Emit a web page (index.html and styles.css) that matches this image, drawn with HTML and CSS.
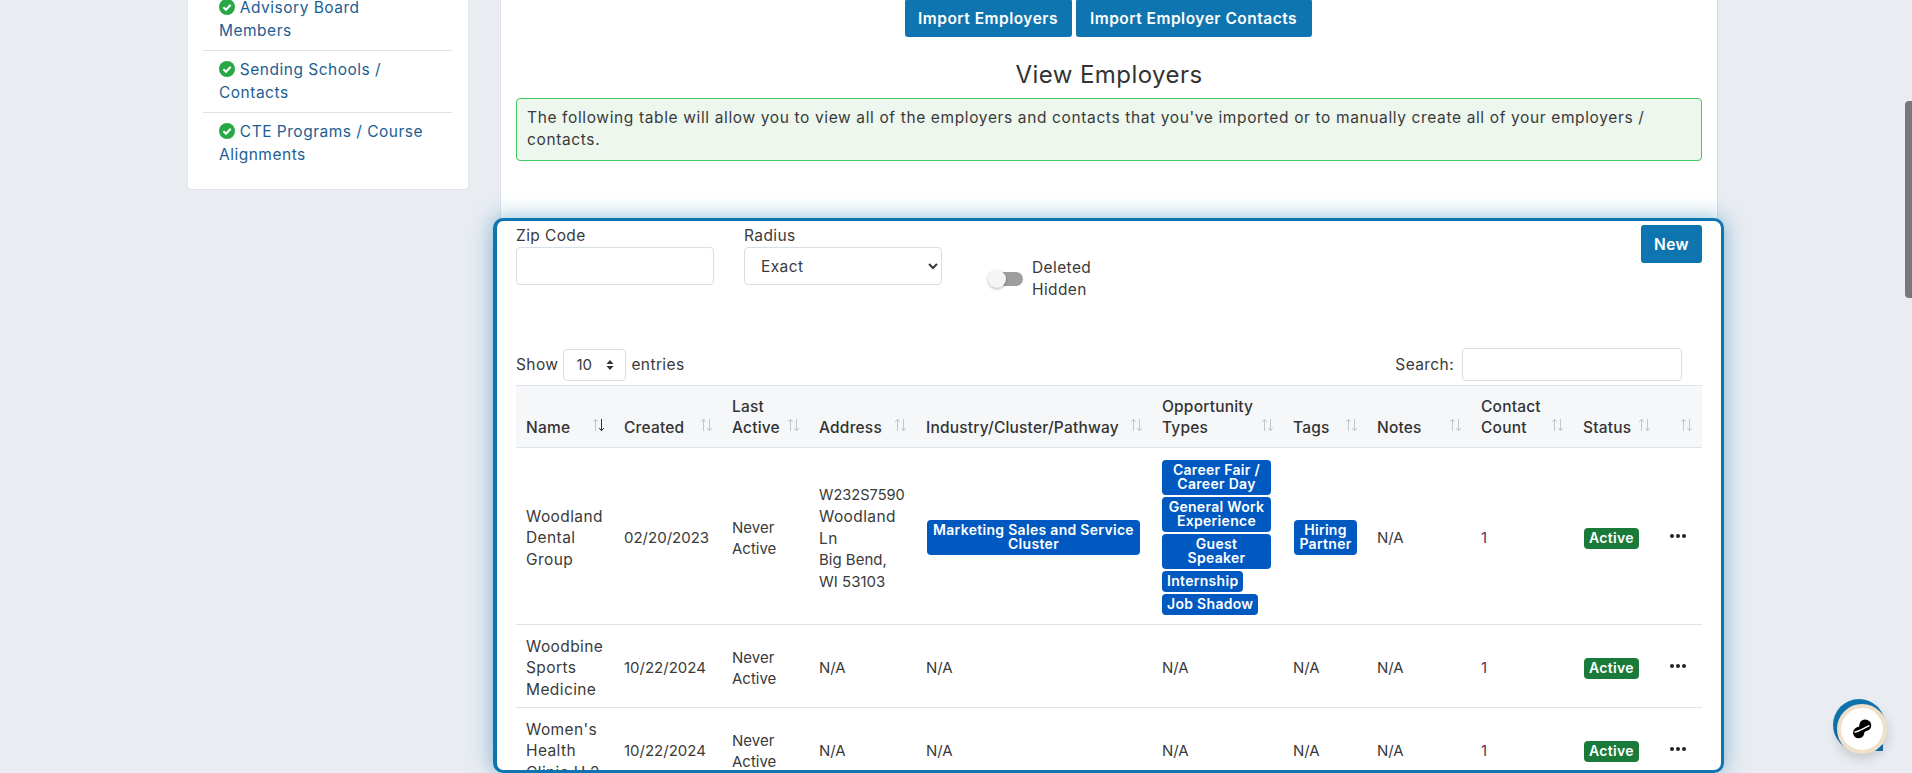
FILE: index.html
```html
<!DOCTYPE html>
<html lang="en">
<head>
<meta charset="utf-8">
<title>View Employers</title>
<link rel="stylesheet" href="styles.css">
</head>
<body>
<svg class="defs" width="0" height="0" aria-hidden="true">
  <symbol id="sort" viewBox="0 0 13 14"><path d="M3.5 13V1.5M1.2 4 3.5 1.2 5.8 4" fill="none" stroke="currentColor" stroke-width="1"/><path d="M9.5 1v11.5M7.2 10l2.3 2.8 2.3-2.8" fill="none" stroke="currentColor" stroke-width="1"/></symbol>
  <symbol id="sort-down" viewBox="0 0 13 14"><path d="M3.5 13V1.5M1.2 4 3.5 1.2 5.8 4" fill="none" stroke="#c3c6ca" stroke-width="1"/><path d="M9.5 1v11.5M7.2 10l2.3 2.8 2.3-2.8" fill="none" stroke="#333" stroke-width="1"/></symbol>
  <symbol id="check" viewBox="0 0 16 16"><circle cx="8" cy="8" r="8" fill="#28a745"/><path d="M4.4 8.3 7 10.8l4.7-5" fill="none" stroke="#fff" stroke-width="2"/></symbol>
</svg>
<div class="page">
  <div class="layout">
    <aside class="sidebar">
      <ul class="steps">
        <li><a class="step"><svg class="check"><use href="#check"/></svg> Advisory Board Members</a></li>
        <li><a class="step"><svg class="check"><use href="#check"/></svg> Sending Schools / Contacts</a></li>
        <li><a class="step"><svg class="check"><use href="#check"/></svg> CTE Programs / Course Alignments</a></li>
      </ul>
    </aside>
    <main class="main">
      <div class="import-row">
        <button class="btn btn-a">Import Employers</button>
        <button class="btn btn-b">Import Employer Contacts</button>
      </div>
      <h2 class="title">View Employers</h2>
      <div class="alert">The following table will allow you to view all of the employers and contacts that you've imported or to manually create all of your employers / contacts.</div>
      <section class="panel">
        <div class="filters">
          <label class="field"><span>Zip Code</span><input class="control" type="text"></label>
          <label class="field"><span>Radius</span><select class="control select"><option>Exact</option></select></label>
          <div class="toggle-group">
            <span class="toggle"><span class="knob"></span></span>
            <span class="toggle-label">Deleted Hidden</span>
          </div>
          <button class="btn btn-new">New</button>
        </div>
        <div class="table-tools">
          <div class="length">Show
            <span class="length-select"><span class="plain">10</span><svg width="8" height="12" viewBox="0 0 8 12"><path d="M4 1 7.5 5h-7zM4 11 .5 7h7z" fill="#333"/></svg></span>
            entries</div>
          <label class="search">Search: <input class="search-input" type="text"></label>
        </div>
        <table class="grid">
          <colgroup>
            <col class="c1"><col class="c2"><col class="c3"><col class="c4"><col class="c5"><col class="c6"><col class="c7"><col class="c8"><col class="c9"><col class="c10"><col class="c11">
          </colgroup>
          <thead>
            <tr>
              <th><div class="th"><span>Name</span><svg class="sort"><use href="#sort-down"/></svg></div></th>
              <th><div class="th"><span>Created</span><svg class="sort"><use href="#sort"/></svg></div></th>
              <th><div class="th"><span>Last<br>Active</span><svg class="sort"><use href="#sort"/></svg></div></th>
              <th><div class="th"><span>Address</span><svg class="sort"><use href="#sort"/></svg></div></th>
              <th><div class="th"><span>Industry/Cluster/Pathway</span><svg class="sort"><use href="#sort"/></svg></div></th>
              <th><div class="th"><span>Opportunity<br>Types</span><svg class="sort"><use href="#sort"/></svg></div></th>
              <th><div class="th"><span>Tags</span><svg class="sort"><use href="#sort"/></svg></div></th>
              <th><div class="th"><span>Notes</span><svg class="sort"><use href="#sort"/></svg></div></th>
              <th><div class="th"><span>Contact<br>Count</span><svg class="sort"><use href="#sort"/></svg></div></th>
              <th><div class="th"><span>Status</span><svg class="sort"><use href="#sort"/></svg></div></th>
              <th><div class="th th-end"><svg class="sort"><use href="#sort"/></svg></div></th>
            </tr>
          </thead>
          <tbody>
            <tr class="row-a">
              <td class="wide">Woodland Dental Group</td>
              <td>02/20/2023</td>
              <td>Never Active</td>
              <td><span class="code">W232S7590</span> <span class="wide">Woodland Ln</span><br>Big Bend, WI 53103</td>
              <td><div class="badges"><span class="badge badge-wide">Marketing Sales and Service Cluster</span></div></td>
              <td><div class="badges">
                <span class="badge badge-full">Career Fair / Career Day</span>
                <span class="badge badge-full">General Work Experience</span>
                <span class="badge badge-full">Guest Speaker</span>
                <span class="badge">Internship</span>
                <span class="badge">Job Shadow</span>
              </div></td>
              <td><div class="badges"><span class="badge badge-tag">Hiring Partner</span></div></td>
              <td>N/A</td>
              <td class="count">1</td>
              <td><span class="status">Active</span></td>
              <td><span class="dots"><i></i><i></i><i></i></span></td>
            </tr>
            <tr class="row-b">
              <td class="wide">Woodbine Sports Medicine</td>
              <td>10/22/2024</td>
              <td>Never Active</td>
              <td>N/A</td><td>N/A</td><td>N/A</td><td>N/A</td><td>N/A</td>
              <td class="count">1</td>
              <td><span class="status">Active</span></td>
              <td><span class="dots"><i></i><i></i><i></i></span></td>
            </tr>
            <tr class="row-b">
              <td class="wide">Women's Health Clinic U.2</td>
              <td>10/22/2024</td>
              <td>Never Active</td>
              <td>N/A</td><td>N/A</td><td>N/A</td><td>N/A</td><td>N/A</td>
              <td class="count">1</td>
              <td><span class="status">Active</span></td>
              <td><span class="dots"><i></i><i></i><i></i></span></td>
            </tr>
          </tbody>
        </table>
      </section>
    </main>
  </div>
  <div class="chat">
    <span class="chat-back"></span>
    <span class="chat-tail"></span>
    <span class="chat-face">
      <svg width="22" height="22" viewBox="0 0 22 22"><g transform="rotate(-48 11 11)"><ellipse cx="6" cy="11" rx="5.6" ry="5.6" fill="#000"/><ellipse cx="16" cy="11" rx="5.8" ry="6" fill="#000"/><rect x="6" y="7" width="10" height="8" fill="#000"/></g><path d="M3.5 14.2 C8 13.5 13 10 18.5 7.6" fill="none" stroke="#fff" stroke-width="1.5"/></svg>
    </span>
  </div>
  <div class="scroll-thumb"></div>
</div>
</body>
</html>
```

FILE: styles.css
```css
* { box-sizing: border-box; }
html, body { margin: 0; padding: 0; }
body { font-family: "Inter", "Open Sans", sans-serif; font-size: 15.5px; letter-spacing: .4px; color: #3a3a3a; }
.defs { position: absolute; }
.page { position: relative; width: 1912px; height: 773px; overflow: hidden; background: #e9edf2; }
.layout { display: flex; align-items: flex-start; gap: 31px; margin-top: -20px; padding-left: 187px; }

.sidebar { width: 282px; height: 210px; flex: none; background: #fff; border: 1px solid #dfe3ea; border-radius: 4px; padding: 8px 16px 0 15px; }
.steps { list-style: none; margin: 0; padding: 0; }
.steps li { padding: 8px 22px 8px 16px; border-bottom: 1px solid #dee2e8; line-height: 22.5px; letter-spacing: .5px; }
.steps li:last-child { border-bottom: 0; }
.step { color: #1b5e93; }
.check { width: 16px; height: 16px; vertical-align: -2px; }

.main { width: 1218px; height: 800px; flex: none; background: #fff; border-left: 1px solid #dde2e8; border-right: 1px solid #d5dce3; padding: 19px 15px 0; }
.import-row { display: flex; justify-content: center; gap: 4px; padding-right: 2px; }
.btn { height: 38px; padding: 0; border: 0; border-radius: 3px; background: #0f75b0; color: #fff; font: 600 15.5px "Inter", sans-serif; letter-spacing: .5px; }
.btn-a { width: 167px; }
.btn-b { width: 236px; }
.title { margin: 20px 0 5px; text-align: center; font-weight: 400; font-size: 24px; letter-spacing: .45px; line-height: 36px; color: #333; }
.alert { height: 63px; padding: 8px 10px; background: #edf7ee; border: 1px solid #45c763; border-radius: 4px; line-height: 22px; letter-spacing: .63px; }

.panel { height: 555px; margin: 57px -22px 0 -23px; padding: 4px 19px 0; background: #fff; border: 3px solid #0f75b0; border-left-width: 4px; border-radius: 10px; box-shadow: 0 0 22px rgba(15, 117, 176, .5); overflow: hidden; position: relative; }
.filters { display: flex; align-items: flex-start; height: 123px; }
.field { display: flex; flex-direction: column; width: 198px; margin-right: 30px; line-height: 22px; }
.control { height: 38px; width: 100%; border: 1px solid #d6dfe6; border-radius: 4px; background: #fff; font: 15.5px "Inter", sans-serif; letter-spacing: .4px; color: #3a3a3a; }
.select { padding-left: 12px; }
.toggle-group { display: flex; align-items: center; margin: 32px 0 0 16px; }
.toggle { position: relative; display: block; width: 35px; height: 14px; margin-right: 9px; }
.toggle::before { content: ""; position: absolute; left: 5px; top: 0; width: 30px; height: 14px; border-radius: 7px; background: #9e9e9e; }
.knob { position: absolute; left: 0; top: -2px; width: 18px; height: 18px; border-radius: 50%; background: #f5f5f5; box-shadow: 0 1px 3px rgba(0, 0, 0, .3); }
.toggle-label { width: 70px; line-height: 22px; }
.btn-new { margin-left: auto; width: 61px; }

.table-tools { display: flex; justify-content: space-between; align-items: center; height: 33px; padding-right: 20px; margin-bottom: 4px; }
.length { display: flex; align-items: center; gap: 5px; }
.length-select { display: flex; justify-content: space-between; align-items: center; width: 63px; height: 32px; padding: 0 11px 0 12px; border: 1px solid #d6dfe6; border-radius: 4px; }
.plain { font-size: 15px; letter-spacing: 0; }
.search { display: flex; align-items: center; gap: 8px; }
.search-input { width: 220px; height: 33px; border: 1px solid #d6dfe6; border-radius: 4px; }

.grid { width: 1186px; table-layout: fixed; border-collapse: collapse; }
.c1 { width: 98px; } .c2 { width: 108px; } .c3 { width: 87px; } .c4 { width: 107px; } .c5 { width: 236px; } .c6 { width: 131px; } .c7 { width: 84px; } .c8 { width: 104px; } .c9 { width: 102px; } .c10 { width: 87px; } .c11 { width: 42px; }
thead tr { height: 62px; background: #f6f7f9; border-top: 1px solid #dee4ea; border-bottom: 1px solid #dee4ea; }
th { padding: 0 10px 9px; font-weight: 500; letter-spacing: .2px; text-align: left; vertical-align: bottom; line-height: 21px; color: #333; }
.th { display: flex; justify-content: space-between; align-items: flex-end; margin-right: -1px; }
.th-end { justify-content: flex-end; margin-right: 0; }
th:last-child { padding-left: 0; padding-right: 9px; }
.sort { width: 13px; height: 14px; margin-bottom: 6px; color: #c3c6ca; flex: none; }
td { padding: 4px 10px 0; line-height: 21.5px; border-bottom: 1px solid #dee4ea; font-size: 15px; letter-spacing: 0; vertical-align: middle; }
.wide, td.wide { font-size: 15.5px; letter-spacing: .4px; }
.code { font-size: 14.6px; }
.row-a { height: 177px; }
.row-b { height: 83px; }
.count { color: #6a2c50; }
.badges { display: flex; flex-direction: column; align-items: flex-start; gap: 2px; margin-bottom: 2px; }
.badge { padding: 3px 5px 4px; background: #0059c1; color: #fff; border-radius: 4px; font-size: 14px; font-weight: 600; letter-spacing: .3px; line-height: 14px; text-align: center; }
.badge-full { width: 109px; }
.badge-wide { width: 213px; margin-left: 1px; }
.badge-tag { width: 63px; padding-left: 2px; padding-right: 2px; margin-left: 1px; }
.status { display: inline-block; margin-left: 1px; padding: 3px 5px 4px; background: #1a7a3a; color: #fff; border-radius: 4px; font-size: 14px; font-weight: 600; letter-spacing: .3px; line-height: 14px; }
.dots { display: inline-flex; gap: 2px; margin-bottom: 6px; vertical-align: middle; }
.dots i { width: 4px; height: 4px; border-radius: 50%; background: #222; }

.chat { position: absolute; left: 1833px; top: 699px; width: 60px; height: 60px; }
.chat-back { position: absolute; left: 0; top: 0; width: 52px; height: 52px; border-radius: 50%; background: #0f75b0; }
.chat-tail { position: absolute; left: 42px; top: 45px; width: 0; height: 0; border-left: 8px solid transparent; border-bottom: 7px solid #0f75b0; }
.chat-face { position: absolute; left: 4px; top: 5px; width: 50px; height: 50px; display: flex; align-items: center; justify-content: center; border-radius: 50%; background: #fff; border: 4px solid #efe0c9; box-shadow: 0 4px 12px rgba(0, 0, 0, .18); }
.scroll-thumb { position: absolute; left: 1905px; top: 101px; width: 7px; height: 197px; background: #77787b; border-radius: 4px 0 0 4px; }
```
